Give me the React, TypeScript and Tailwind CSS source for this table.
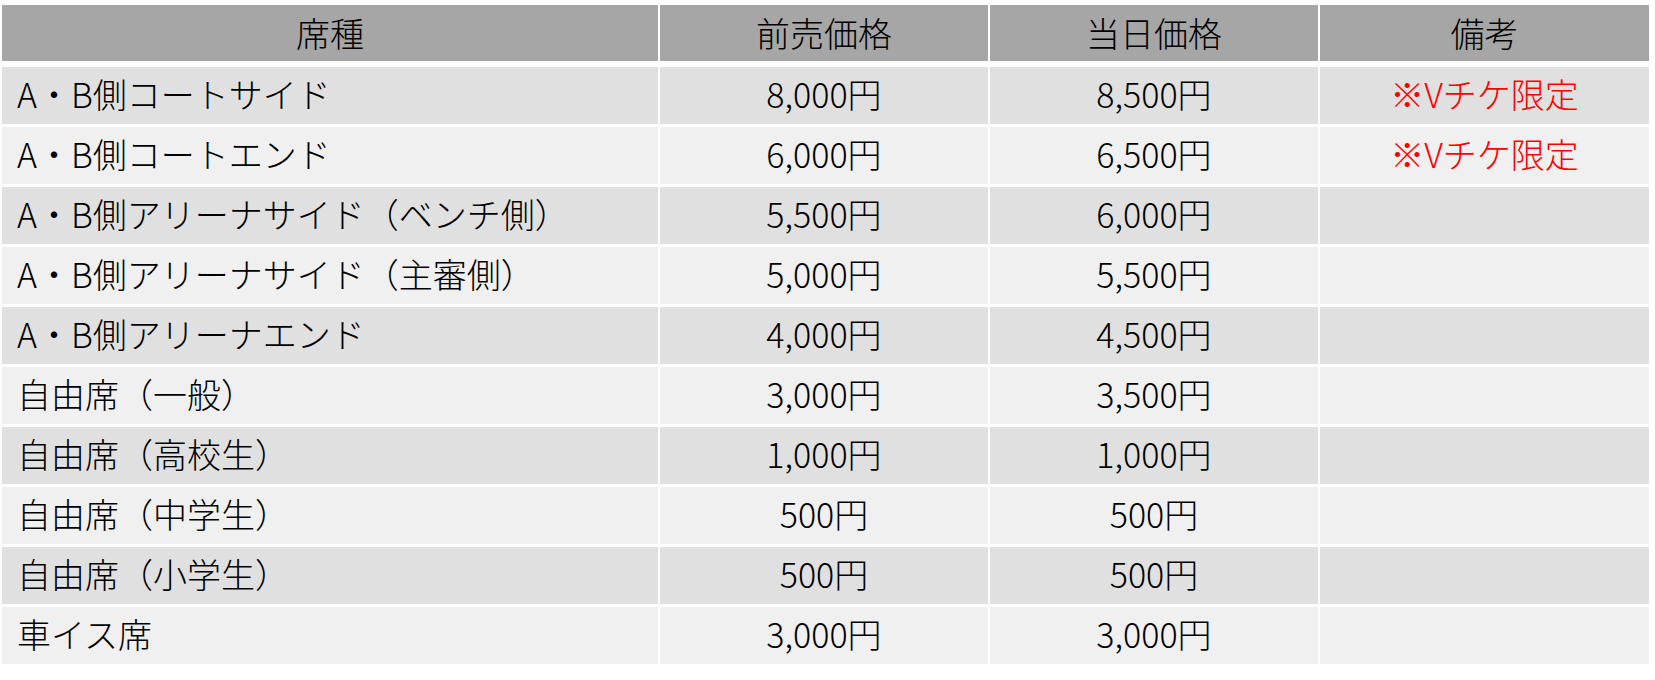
import React from "react";

type Row = {
  seat: string;
  advance: string;
  sameDay: string;
  note?: string;
};

const rows: Row[] = [
  { seat: "A・B側コートサイド", advance: "8,000円", sameDay: "8,500円", note: "※Vチケ限定" },
  { seat: "A・B側コートエンド", advance: "6,000円", sameDay: "6,500円", note: "※Vチケ限定" },
  { seat: "A・B側アリーナサイド（ベンチ側）", advance: "5,500円", sameDay: "6,000円" },
  { seat: "A・B側アリーナサイド（主審側）", advance: "5,000円", sameDay: "5,500円" },
  { seat: "A・B側アリーナエンド", advance: "4,000円", sameDay: "4,500円" },
  { seat: "自由席（一般）", advance: "3,000円", sameDay: "3,500円" },
  { seat: "自由席（高校生）", advance: "1,000円", sameDay: "1,000円" },
  { seat: "自由席（中学生）", advance: "500円", sameDay: "500円" },
  { seat: "自由席（小学生）", advance: "500円", sameDay: "500円" },
  { seat: "車イス席", advance: "3,000円", sameDay: "3,000円" },
];

const cols = "grid grid-cols-[656px_328px_328px_329px] gap-x-[2px]";

export default function App() {
  return (
    <div
      className="min-h-screen bg-white pt-[5px] pl-[2px] text-[34px] font-light leading-none text-black"
      style={{ fontFamily: '"Noto Sans CJK JP", "Noto Sans", sans-serif' }}
    >
      {/* Header */}
      <div className={`${cols} h-[56px] mb-[6px]`}>
        {["席種", "前売価格", "当日価格", "備考"].map((h) => (
          <div key={h} className="bg-[#a6a6a6] flex items-center justify-center">
            {h}
          </div>
        ))}
      </div>

      {/* Body */}
      <div className="flex flex-col gap-y-[3px]">
        {rows.map((r, i) => {
          const bg = i % 2 === 0 ? "bg-[#e0e0e0]" : "bg-[#f0f0f0]";
          return (
            <div key={r.seat} className={`${cols} h-[57px]`}>
              <div className={`${bg} flex items-center pl-[15px] pb-[4px]`}>{r.seat}</div>
              <div className={`${bg} flex items-center justify-center pb-[4px]`}>{r.advance}</div>
              <div className={`${bg} flex items-center justify-center pb-[4px]`}>{r.sameDay}</div>
              <div className={`${bg} flex items-center justify-center pb-[4px] text-[#ff0000]`}>
                {r.note ?? ""}
              </div>
            </div>
          );
        })}
      </div>
    </div>
  );
}
